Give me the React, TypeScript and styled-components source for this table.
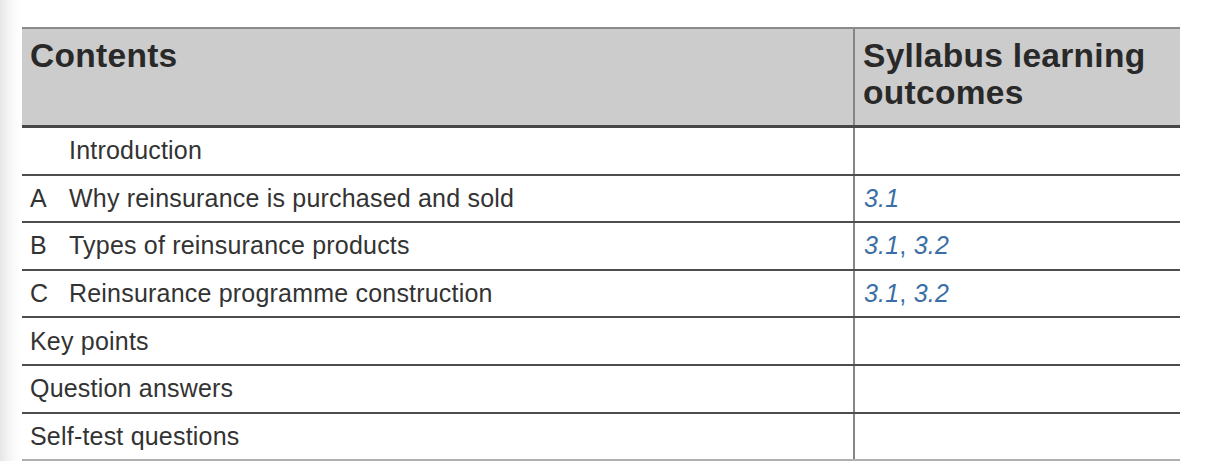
import React from "react";
import styled, {createGlobalStyle} from "styled-components";

type Row = {
  letter?: string;
  title: string;
  outcomes?: string[];
  indent?: boolean;
};

const rows: Row[] = [
  {title: "Introduction", indent: true},
  {letter: "A", title: "Why reinsurance is purchased and sold", outcomes: ["3.1"]},
  {letter: "B", title: "Types of reinsurance products", outcomes: ["3.1", "3.2"]},
  {letter: "C", title: "Reinsurance programme construction", outcomes: ["3.1", "3.2"]},
  {title: "Key points"},
  {title: "Question answers"},
  {title: "Self-test questions"},
];

function App() {
  return (
    <>
      <GlobalStyle />
      <Page>
        <Table>
          <HeaderRow>
            <HeaderCell>Contents</HeaderCell>
            <HeaderCell isLast>Syllabus learning outcomes</HeaderCell>
          </HeaderRow>
          {rows.map((row, i) => (
            <BodyRow key={row.title} isLast={i === rows.length - 1}>
              <ContentsCell>
                {row.letter || row.indent ? <Letter>{row.letter}</Letter> : null}
                <span>{row.title}</span>
              </ContentsCell>
              <OutcomeCell>
                {row.outcomes?.map((o, j) => (
                  <React.Fragment key={o}>
                    {j > 0 && ", "}
                    <OutcomeRef>{o}</OutcomeRef>
                  </React.Fragment>
                ))}
              </OutcomeCell>
            </BodyRow>
          ))}
        </Table>
      </Page>
    </>
  );
}

export default App;

const GlobalStyle = createGlobalStyle`
  html, body {
    margin: 0;
    padding: 0;
    height: 100%;
    overflow: hidden;
  }
  body {
    background: linear-gradient(to right, #e6e6e6 0px, #f3f3f3 8px, #fcfcfc 16px, #ffffff 22px);
    font-family: "Liberation Sans", Arial, sans-serif;
  }
`;

const Page = styled.div`
  padding: 27px 0 0 22px;
`;

const Table = styled.div`
  width: 1158px;
  display: flex;
  flex-direction: column;
`;

const HeaderRow = styled.div`
  display: grid;
  grid-template-columns: 833px 1fr;
  height: 96px;
  background: #cccccc;
  border-top: 2px solid #8a8a8a;
  border-bottom: 3px solid #474747;
`;

const HeaderCell = styled.div<{isLast?: boolean}>`
  padding: 8px 8px 0 8px;
  font-size: 33.5px;
  line-height: 37px;
  letter-spacing: 0.3px;
  font-weight: bold;
  color: #292929;
  border-right: ${props => (props.isLast ? "none" : "2px solid #858585")};
`;

const BodyRow = styled.div<{isLast?: boolean}>`
  display: grid;
  grid-template-columns: 833px 1fr;
  height: 45.6px;
  border-bottom: 2.2px solid ${props => (props.isLast ? "#b0b0b0" : "#4d4d4d")};
`;

const ContentsCell = styled.div`
  display: flex;
  align-items: center;
  padding-left: 8px;
  font-size: 25px;
  letter-spacing: 0.2px;
  color: #333333;
  border-right: 2px solid #858585;
`;

const Letter = styled.span`
  width: 39px;
  flex-shrink: 0;
`;

const OutcomeCell = styled.div`
  display: flex;
  align-items: center;
  padding-left: 9px;
  font-size: 25px;
  letter-spacing: 0.2px;
  color: #3a6ea6;
  white-space: pre;
`;

const OutcomeRef = styled.span`
  font-style: italic;
`;
